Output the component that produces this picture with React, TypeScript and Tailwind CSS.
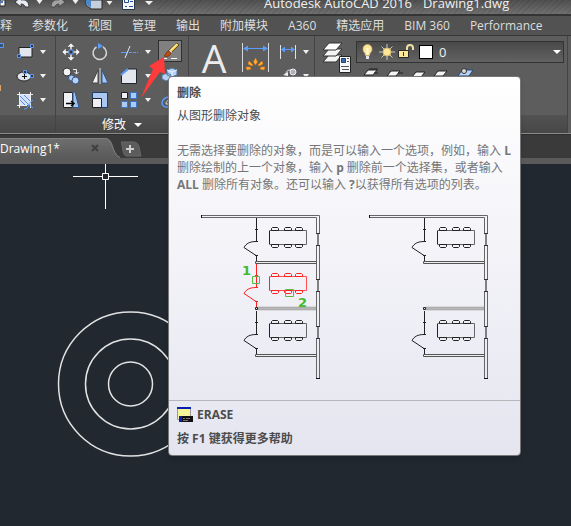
import type { ReactNode } from "react";

const tabs = ["释", "参数化", "视图", "管理", "输出", "附加模块", "A360", "精选应用", "BIM 360", "Performance"];

function Caret({ label }: { label: string }) {
  return (
    <button aria-label={label} className="flex h-6 w-2 items-center justify-center">
      <svg width="6" height="4" viewBox="0 0 6 4" fill="#f0f0f0">
        <path d="M0 0h6L3 4z" />
      </svg>
    </button>
  );
}

function Tool({
  label,
  active = false,
  children,
}: {
  label: string;
  active?: boolean;
  children: ReactNode;
}) {
  return (
    <button
      aria-label={label}
      className={
        active
          ? "flex h-[22px] w-6 items-center justify-center border border-[#303030] bg-[#808080]"
          : "flex h-6 w-6 items-center justify-center"
      }
    >
      <svg width="20" height="20" viewBox="0 0 20 20" fill="none">
        {children}
      </svg>
    </button>
  );
}

function QuickAccess() {
  return (
    <svg width="157" height="14" viewBox="0 0 157 14" fill="none" className="shrink-0">
      <path d="M0 0h5v6H0z" fill="#f2f4f8" stroke="#2b2b2b" />
      <path d="M0 2h3" stroke="#5279b5" strokeWidth="2" />
      <path d="M15 2l6-5v3c5-1 8 2 8 7h-4c0-2-2-3-4-3v3z" fill="#e8edf3" stroke="#3a3a3a" />
      <path d="M65 2l-6-5v3c-5-1-8 2-8 7h4c0-2 2-3 4-3v3z" fill="#a2a2a2" stroke="#4a4a4a" />
      <path d="M36.500 0h6l-3 4zM72.500 0h6l-3 4zM106.500 1h6l-3 4zM145 1h8l-4 4z" fill="#f0f0f0" />
      <path d="M86 0h16v9H91l-5-4z" fill="#c5cedb" stroke="#2b2b2b" />
      <path d="M86 0h5v8l-5-4z" fill="#4c88c8" />
      <path d="M122.500 -2h12v11.500h-12z" fill="#f4f6fa" stroke="#2b3648" />
      <path d="M124.500 -.5h4v3h-4zM125 6.500h2M129 6.500h4M130 1.500h3" stroke="#1f4f92" />
    </svg>
  );
}

function DrawPanel() {
  return (
    <section aria-label="绘图" className="flex w-14 shrink-0 flex-col border-r border-[#444]">
      <div className="grid h-[79px] grid-cols-[13px_26px_8px] content-start pt-1">
        <svg width="5" height="72" viewBox="0 0 5 72" fill="none" className="row-span-3">
          <path d="M-1 3.500h4.500v4H-1z" stroke="#5a9cff" fill="#33527d" />
          <path d="M0.500 45v6" stroke="#d9a36a" />
        </svg>
        <Tool label="矩形">
          <path d="M4 5.500h13v9.500H4z" fill="#e3e6ee" stroke="#222" />
          <path d="M15.500 2.500h3v3h-3zM2.500 12.500h3v3h-3z" fill="#333" stroke="#5a9cff" />
        </Tool>
        <Caret label="矩形选项" />
        <Tool label="椭圆">
          <ellipse cx="9" cy="10.500" rx="7" ry="4.500" fill="#dfe3ec" stroke="#222" />
          <path d="M7 10.500h5M9.500 8v5" stroke="#111" />
          <path d="M8.500 4.500h3v3h-3zM15.500 8.500h3v3h-3z" fill="#333" stroke="#5a9cff" />
        </Tool>
        <Caret label="椭圆选项" />
        <Tool label="图案填充">
          <path d="M5 5h10v10H5z" fill="#d3e1f8" />
          <path d="M5 10l5 5M5 6l9 9M9 5l6 6" stroke="#5a8de0" />
          <path d="M4.500 2v16M15.500 2v16M2 4.500h16M2 15.500h10" stroke="#eee" />
          <path d="M9 19c3 0 4-2 5-4s2-4 4-5M13 14l5 4" stroke="#5a9cff" />
        </Tool>
        <Caret label="图案填充选项" />
      </div>
      <div className="flex-1 bg-linear-to-b from-[#525252] to-[#474747]" />
    </section>
  );
}

function ModifyPanel() {
  return (
    <section aria-label="修改" className="flex w-[133px] shrink-0 flex-col border-r border-[#444]">
      <div className="grid h-[79px] grid-cols-[30px_28px_30px_8px_36px] content-start justify-items-center pt-1">
        <Tool label="移动">
          <path d="M10 1l4 4h-3v3H9V5H6zM10 19l4-4h-3v-3H9v3H6zM1 10l4-4v3h3v2H5v3zM19 10l-4-4v3h-3v2h3v3z" fill="#f2f2f2" stroke="#444" strokeWidth=".5" />
          <path d="M8 8h4v4H8z" fill="#333" stroke="#5a9cff" />
        </Tool>
        <Tool label="旋转">
          <path d="M13 5a6.700 6.700 0 1 1-6.500 0" stroke="#d6d6d6" strokeWidth="1.500" />
          <path d="M8 1l5 3-5 3z" fill="#5a9cff" />
        </Tool>
        <Tool label="修剪">
          <path d="M2 10.500h6" stroke="#5a9cff" />
          <path d="M10 10.500h9" stroke="#5a9cff" strokeDasharray="3 1" />
          <path d="M6 16l5-12" stroke="#dce8ff" />
        </Tool>
        <Caret label="修剪选项" />
        <Tool label="删除" active>
          <path d="M17 2l2 2-8 8-3-2z" fill="#f5bd35" stroke="#3a2b12" strokeWidth=".7" />
          <path d="M17 3l-6 6" stroke="#fff3a8" strokeWidth="1.300" />
          <path d="M10 9l2 2-2 2-2-2z" fill="#d7e2f2" />
          <path d="M9 10l2 2c-1 4-5 4-7 3 2-1 2-5 5-5z" fill="#c24a0b" stroke="#5d2208" strokeWidth=".6" />
          <path d="M3 17.500h4M11 17.500h6" stroke="#fff" />
        </Tool>

        <Tool label="复制">
          <circle cx="6" cy="6" r="4" fill="#f2f3f7" stroke="#333" />
          <circle cx="10.500" cy="12" r="3" fill="#a8c8f5" stroke="#36537f" />
          <circle cx="14.500" cy="14.500" r="3.500" fill="#b8d2f8" stroke="#36537f" />
          <path d="M12 3.500h3.500V8M13.500 6l2 2 2-2" stroke="#eee" />
        </Tool>
        <Tool label="镜像">
          <path d="M8 4v13H2z" fill="#f2f2f2" stroke="#444" />
          <path d="M12 4v13h6z" fill="#a9c9f5" stroke="#31588f" />
          <path d="M10 2v16" stroke="#ddd" />
        </Tool>
        <Tool label="圆角">
          <path d="M2.500 17.500V9l7-6h8v14.500z" fill="#e5e7ee" stroke="#1d2430" />
          <path d="M2 9l7-6" stroke="#5a9cff" strokeWidth="2" />
        </Tool>
        <Caret label="圆角选项" />
        <Tool label="分解">
          <path d="M2 9l5-2 4 2v4l-5 2-4-2zM7 4l5-2 5 2v5l-5 2-5-2zM10 12l5-2 4 2v4l-5 2-4-2z" fill="#b5d2f4" stroke="#4b759f" />
          <path d="M7 4l5 2 5-2M12 6v5M10 12l4 2 5-2M14 14v4" stroke="#e9f3ff" />
        </Tool>

        <Tool label="拉伸">
          <path d="M2.500 2.500h9v15h-9z" fill="#f0f1f5" stroke="#222" />
          <path d="M12 2h2l4 15.500h-6z" fill="#9fc2ef" stroke="#31588f" />
          <path d="M5 13.500h7M10 11l3 2.500-3 2.500" stroke="#000" strokeWidth="1.500" />
        </Tool>
        <Tool label="缩放">
          <path d="M2.500 2.500h15v15h-15z" fill="#a9c8f2" stroke="#1e3c68" />
          <path d="M2.500 8.500h9v9h-9z" fill="#eef0f5" stroke="#222" />
        </Tool>
        <Tool label="阵列">
          <path d="M2.500 2.500h6v6h-6z" fill="#eef0f5" stroke="#222" />
          <path d="M11.500 2.500h6v6h-6zM2.500 11.500h6v6h-6zM11.500 11.500h6v6h-6z" fill="#a9cbf8" stroke="#3f74c4" />
        </Tool>
        <Caret label="阵列选项" />
        <Tool label="偏移">
          <path d="M14 2c-4 0-5 2-5 5-4 0-7 3-7 6 0 2 2 4 4 4h12" stroke="#5a9cff" strokeWidth="1.500" />
          <path d="M14 5c-2 0-2 2-2 5-4 0-6 1-6 4h12" stroke="#e0e0e0" />
        </Tool>
      </div>
      <button className="flex flex-1 items-center justify-center gap-2 bg-linear-to-b from-[#525252] to-[#474747] pt-px text-xs text-white">
        修改
        <svg width="8" height="4" viewBox="0 0 8 4" fill="#fff">
          <path d="M0 0h8L4 4z" />
        </svg>
      </button>
    </section>
  );
}

function AnnotationPanel() {
  return (
    <section aria-label="注释" className="flex w-[126px] shrink-0 flex-col border-r border-[#444]">
      <div className="flex h-[79px] items-start pt-1">
        <button aria-label="文字" className="flex h-9 w-[50px] items-center justify-center font-['Open_Sans'] text-[39px] leading-9 text-[#ececec]">
          A
        </button>
        <button aria-label="标注" className="flex w-[34px] justify-center">
          <svg width="28" height="34" viewBox="0 0 28 34" fill="none">
            <path d="M.5 3v29M26.500 3v29" stroke="#d8d8d8" />
            <path d="M2 8.500h23" stroke="#5a9cff" />
            <path d="M1 8.500l5-3v6zM26 8.500l-5-3v6z" fill="#5a9cff" />
            <path d="M13.500 18l2 4-2 3-2-3zM7 21l4 4-1 1-4-2zM20 21l-4 4 1 1 4-2zM4 27l4 0 1 2-4 1zM23 27l-4 0-1 2 4 1z" fill="#ffb52c" stroke="#de6f12" strokeWidth=".6" />
          </svg>
        </button>
        <div className="flex pl-[5px]">
          <svg width="24" height="48" viewBox="0 0 24 48" fill="none">
            <path d="M2.500 5v14M17.500 5v14M8 34c0-2 1-4 4-4h3" stroke="#e0e0e0" />
            <path d="M4 9.500h12" stroke="#5a9cff" />
            <path d="M3 9.500l4-3v6zM17 9.500l-4-3v6z" fill="#5a9cff" />
            <circle cx="15" cy="32" r="3" fill="#aeb4be" stroke="#eee" />
            <path d="M5 35l5-3v4z" fill="#eee" />
          </svg>
          <div className="flex flex-col">
            <Caret label="线性标注选项" />
            <Caret label="引线选项" />
          </div>
        </div>
      </div>
      <div className="flex-1 bg-linear-to-b from-[#525252] to-[#474747]" />
    </section>
  );
}

function LayersPanel() {
  return (
    <section aria-label="图层" className="flex min-w-0 flex-1 flex-col">
      <div className="flex h-[79px] items-start pt-[5px] pr-[3px]">
        <button aria-label="图层特性" className="flex w-[41px] shrink-0 justify-end pr-1">
          <svg width="30" height="34" viewBox="0 0 30 34" fill="none">
            <path d="M7 14h13l-6 7H1z" fill="#f4f4f4" stroke="#333" />
            <path d="M7 8h13l-6 7H1z" fill="#f4f4f4" stroke="#333" />
            <path d="M7 2h13l-6 7H1z" fill="#fff" stroke="#333" />
            <path d="M17.500 15.500h11v16h-11z" fill="#f5f6f8" stroke="#222" />
            <path d="M19.500 17.500h4v4h-4z" fill="#3c6ca8" stroke="#1f3f6c" />
            <path d="M25 17.500h2M25 20.500h2M19 25.500h8M20 28.500h7" stroke="#555" />
          </svg>
        </button>
        <div className="min-w-0 flex-1">
          <div className="flex h-[22px] items-center border border-[#333] bg-linear-to-b from-[#494949] to-[#626262] pr-0.5">
            <svg width="62" height="20" viewBox="0 0 62 20" fill="none" className="shrink-0">
              <path d="M8.500 13.500c0-3-2.500-3-2.500-6.500a4.500 4.500 0 0 1 9 0c0 3.500-2.500 3.500-2.500 6.500z" fill="#ffe79a" stroke="#d6b56c" strokeWidth=".7" />
              <path d="M10.500 6v7" stroke="#fff8d8" strokeWidth="2" />
              <path d="M9 14h3v3H9z" fill="#dce5f0" />
              <path d="M30 2v16M22 10h16M24.500 4.500l11 11M35.500 4.500l-11 11" stroke="#c9c9c0" />
              <circle cx="30" cy="10" r="4" fill="#ffe79a" stroke="#d5b768" />
              <path d="M50 10V6c0-4 6-4 6 0v2" stroke="#efe0a4" strokeWidth="2" />
              <path d="M41.500 8.500h10v7h-10z" fill="#ffe79a" stroke="#292929" />
              <path d="M46.500 10v4" stroke="#333" />
            </svg>
            <div className="h-3.5 w-3.5 shrink-0 border border-black bg-white" />
            <select aria-label="当前图层" className="min-w-0 flex-1 appearance-none bg-transparent pl-1.5 text-[13px] leading-5 text-[#f0f0f0] outline-none">
              <option>0</option>
            </select>
            <svg width="8" height="4" viewBox="0 0 8 4" fill="#fff" className="shrink-0">
              <path d="M0 0h8L4 4z" />
            </svg>
          </div>
          <svg width="130" height="20" viewBox="0 0 130 20" fill="none">
            <path d="M12 7h9l-4 5H8zM35 8h9l-4 5h-9zM60 9h9l-4 5h-9z" fill="#f4f4f4" stroke="#222" />
            <path d="M13 6h9M18 10h4M42 10h5" stroke="#222" />
            <path d="M106 7h11l-4 6h-11z" fill="#b8d3f4" stroke="#23487a" />
            <circle cx="108" cy="8" r="2.500" fill="#d8d8d8" stroke="#333" />
            <path d="M82 8h9l-4 5h-9z" fill="#f4f4f4" stroke="#222" />
          </svg>
        </div>
      </div>
      <div className="flex-1 bg-linear-to-b from-[#525252] to-[#474747]" />
    </section>
  );
}

function Table({ y, color = "#222", frame = "#666" }: { y: number; color?: string; frame?: string }) {
  return (
    <g transform={`translate(0 ${y})`} fill="none">
      <path d="M69.500 15.500h37v14h-37z" stroke={frame} />
      <path d="M69.500 16v13" stroke={color} />
      <path
        d="M71.500 15.500v-2l1-1h5l1 1v2zM84.500 15.500v-2l1-1h5l1 1v2zM95.500 15.500v-2l1-1h5l1 1v2zM71.500 29.500v2l1 1h5l1-1v-2zM84.500 29.500v2l1 1h5l1-1v-2zM95.500 29.500v2l1 1h5l1-1v-2z"
        stroke={color}
      />
    </g>
  );
}

function Door({ y, color = "#222" }: { y: number; color?: string }) {
  return (
    <g transform={`translate(0 ${y})`} stroke={color} fill="none">
      <path d="M56.500 3v23M56.500 40v6" />
      <path d="M55 14.500h3M55 26.500h3M55 40.500h3" />
      <path d="M56 26.500c-6 0-10 2-12 6l12 8" />
    </g>
  );
}

function Plan({ erased = false }: { erased?: boolean }) {
  return (
    <svg width="130" height="168" viewBox="0 0 130 168" fill="none" role="img" aria-label={erased ? "删除后" : "删除前"}>
      <path d="M1 .5h118.500v18M1 2.500h115.500v16M116.500 30v34.500M119.500 30v34.500M116.500 76v35.500M119.500 76v35.500M116.500 123v40.500M119.500 123v40.500" stroke="#666" />
      <path d="M1.500 0v3M116 163.500h4M118 18v12M118 64v12M118 111v12" stroke="#111" />
      <path d="M116 18.500h4M116 30.500h4M116 64.500h4M116 76.500h4M116 111.500h4M116 123.500h4" stroke="#333" />
      <path d="M55.500 46.500h61v2h-61zM55.500 139.500h61v2h-61z" stroke="#555" fill="#eee" />
      <path d="M58 92h58v3H58z" fill="#b5b5b5" stroke="#999" strokeWidth=".5" />
      <path d="M55.500 92.500h2v2h-2z" stroke="#222" />
      <Door y={0} />
      <Door y={93} />
      <Table y={0} />
      <Table y={93} />
      {!erased && (
        <>
          <Door y={46} color="#ff2020" />
          <Table y={46} color="#ff2020" frame="#ff5050" />
          <path d="M52.500 61.500h7v7h-7zM85.500 74.500h8v7h-8z" stroke="#54bd3d" />
          <g fill="#43b92d" fontFamily="DejaVu Sans" fontWeight="bold" fontSize="13">
            <text x="42" y="60">1</text>
            <text x="98" y="92">2</text>
          </g>
        </>
      )}
    </svg>
  );
}

function EraseTooltip() {
  return (
    <aside
      role="tooltip"
      className="absolute top-[76px] left-[168px] w-[353px] rounded-sm border border-[#777] bg-linear-to-b from-white to-[#e5e5f0] text-xs text-[#4c4c4c] shadow-md"
    >
      <div className="px-2 pt-1.5">
        <h2 className="leading-5 font-bold">删除</h2>
        <p className="pt-[3px] leading-5">从图形删除对象</p>
        <p className="pt-4 leading-[17px] whitespace-nowrap text-[#767676]">
          无需选择要删除的对象，而是可以输入一个选项，例如，输入 <b>L</b>
          <br />
          删除绘制的上一个对象，输入 <b>p</b> 删除前一个选择集，或者输入
          <br />
          <b>ALL</b> 删除所有对象。还可以输入 <b>?</b>以获得所有选项的列表。
        </p>
      </div>
      <div className="flex gap-[38px] pt-[22px] pb-[17px] pl-[31px]">
        <Plan />
        <Plan erased />
      </div>
      <footer className="border-t border-[#b5b5bb] px-2 pt-1 pb-1.5 font-bold">
        <div className="flex h-5 items-center gap-1">
          <svg width="16" height="16" viewBox="0 0 16 16" fill="none">
            <path d="M.5.5h13v12H.5z" fill="#f5f59a" stroke="#999" />
            <path d="M0 1h14" stroke="#0a1fb0" strokeWidth="2" />
            <path d="M3 9h13v6H3z" fill="#111" />
            <path d="M2 9h3v6H2z" fill="#0a1fb0" />
            <path d="M6 11.500h2M9 11.500h4M6 13.500h5" stroke="#777" />
          </svg>
          ERASE
        </div>
        <p className="pt-1 leading-5">按 F1 键获得更多帮助</p>
      </footer>
    </aside>
  );
}

export default function App() {
  return (
    <div className="relative flex min-h-screen flex-col overflow-hidden bg-[#212830] font-['Open_Sans','Noto_Sans_CJK_SC',sans-serif]">
      <header className="flex h-4 items-start overflow-hidden border-b-2 border-[#343434] bg-linear-to-b from-[#505050] to-[#707070]">
        <QuickAccess />
        <h1 className="flex h-3.5 flex-1 items-center gap-[11px] bg-[repeating-linear-gradient(135deg,#0000_0px,#0000_3px,#00000018_3px,#00000018_4px)] pb-2 pl-[107px] text-[13px] leading-3 whitespace-nowrap text-[#f0f0f0]">
          <span>Autodesk AutoCAD 2016</span>
          <span>Drawing1.dwg</span>
        </h1>
      </header>

      <nav className="flex h-5 items-center gap-5 overflow-hidden border-b border-[#383838] bg-[#525252] text-xs whitespace-nowrap text-[#dedede]">
        {tabs.map((tab) => (
          <button key={tab}>{tab}</button>
        ))}
      </nav>

      <div className="flex h-[98px] border-b border-[#8a8a8a] bg-[#5d5d5d]">
        <DrawPanel />
        <ModifyPanel />
        <AnnotationPanel />
        <LayersPanel />
        <div className="w-1 border-l border-[#444]" />
      </div>

      {/* Document tabs */}
      <div className="flex h-[30px] items-end border-t border-b-[6px] border-t-[#2d2d2d] border-b-[#5a5a5a] bg-[#3a3a3a]">
        <div className="flex h-5 items-center">
          <button className="flex h-5 w-[89px] items-center border-t border-[#808080] bg-linear-to-b from-[#6e6e6e] to-[#5a5a5a] text-xs text-white">
            Drawing1*
          </button>
          <button aria-label="关闭图形" className="flex h-5">
            <svg width="32" height="20" viewBox="0 0 32 20" fill="none">
              <defs>
                <linearGradient id="tab" x1="0" y1="0" x2="0" y2="1">
                  <stop offset="0" stopColor="#6e6e6e" />
                  <stop offset="1" stopColor="#5a5a5a" />
                </linearGradient>
              </defs>
              <path d="M0 0h16c10 0 6 16 16 20H0z" fill="url(#tab)" />
              <path d="M0 .5h16c9 0 6 15 15 19" stroke="#808080" />
              <path d="M3 7l6 6M9 7l-6 6" stroke="#404040" strokeWidth="2" />
            </svg>
          </button>
        </div>
        <button aria-label="新建图形" className="flex h-[17px]">
          <svg width="21" height="17" viewBox="0 0 21 17" fill="none">
            <path d="M0 1h12c7 0 6 7 8 14H5C1 13 2 5 0 1z" fill="#5c5c5c" stroke="#696969" />
            <path d="M5 8h8M9 4v8" stroke="#d0d0d0" strokeWidth="2" />
          </svg>
        </button>
      </div>

      <main className="flex-1">
        <svg width="240" height="300" viewBox="0 0 240 300" fill="none">
          <g stroke="#fff">
            <path d="M73 12.500h29M109 12.500h29M105.500 0v9M105.500 16v29" />
            <path d="M102.500 9.500h6v6h-6z" />
          </g>
          <g stroke="#e2e2e2" strokeWidth="1.500">
            <circle cx="130.500" cy="220" r="72" />
            <circle cx="130.500" cy="220" r="45" />
            <circle cx="130.500" cy="220" r="22" />
          </g>
        </svg>
      </main>

      <EraseTooltip />

      <svg width="26" height="42" viewBox="0 0 26 42" className="pointer-events-none absolute top-[57px] left-[141px]">
        <path d="M23 0L8 9l4 3L0 41l19-26 5 2z" fill="#ff3b3b" />
      </svg>
    </div>
  );
}
